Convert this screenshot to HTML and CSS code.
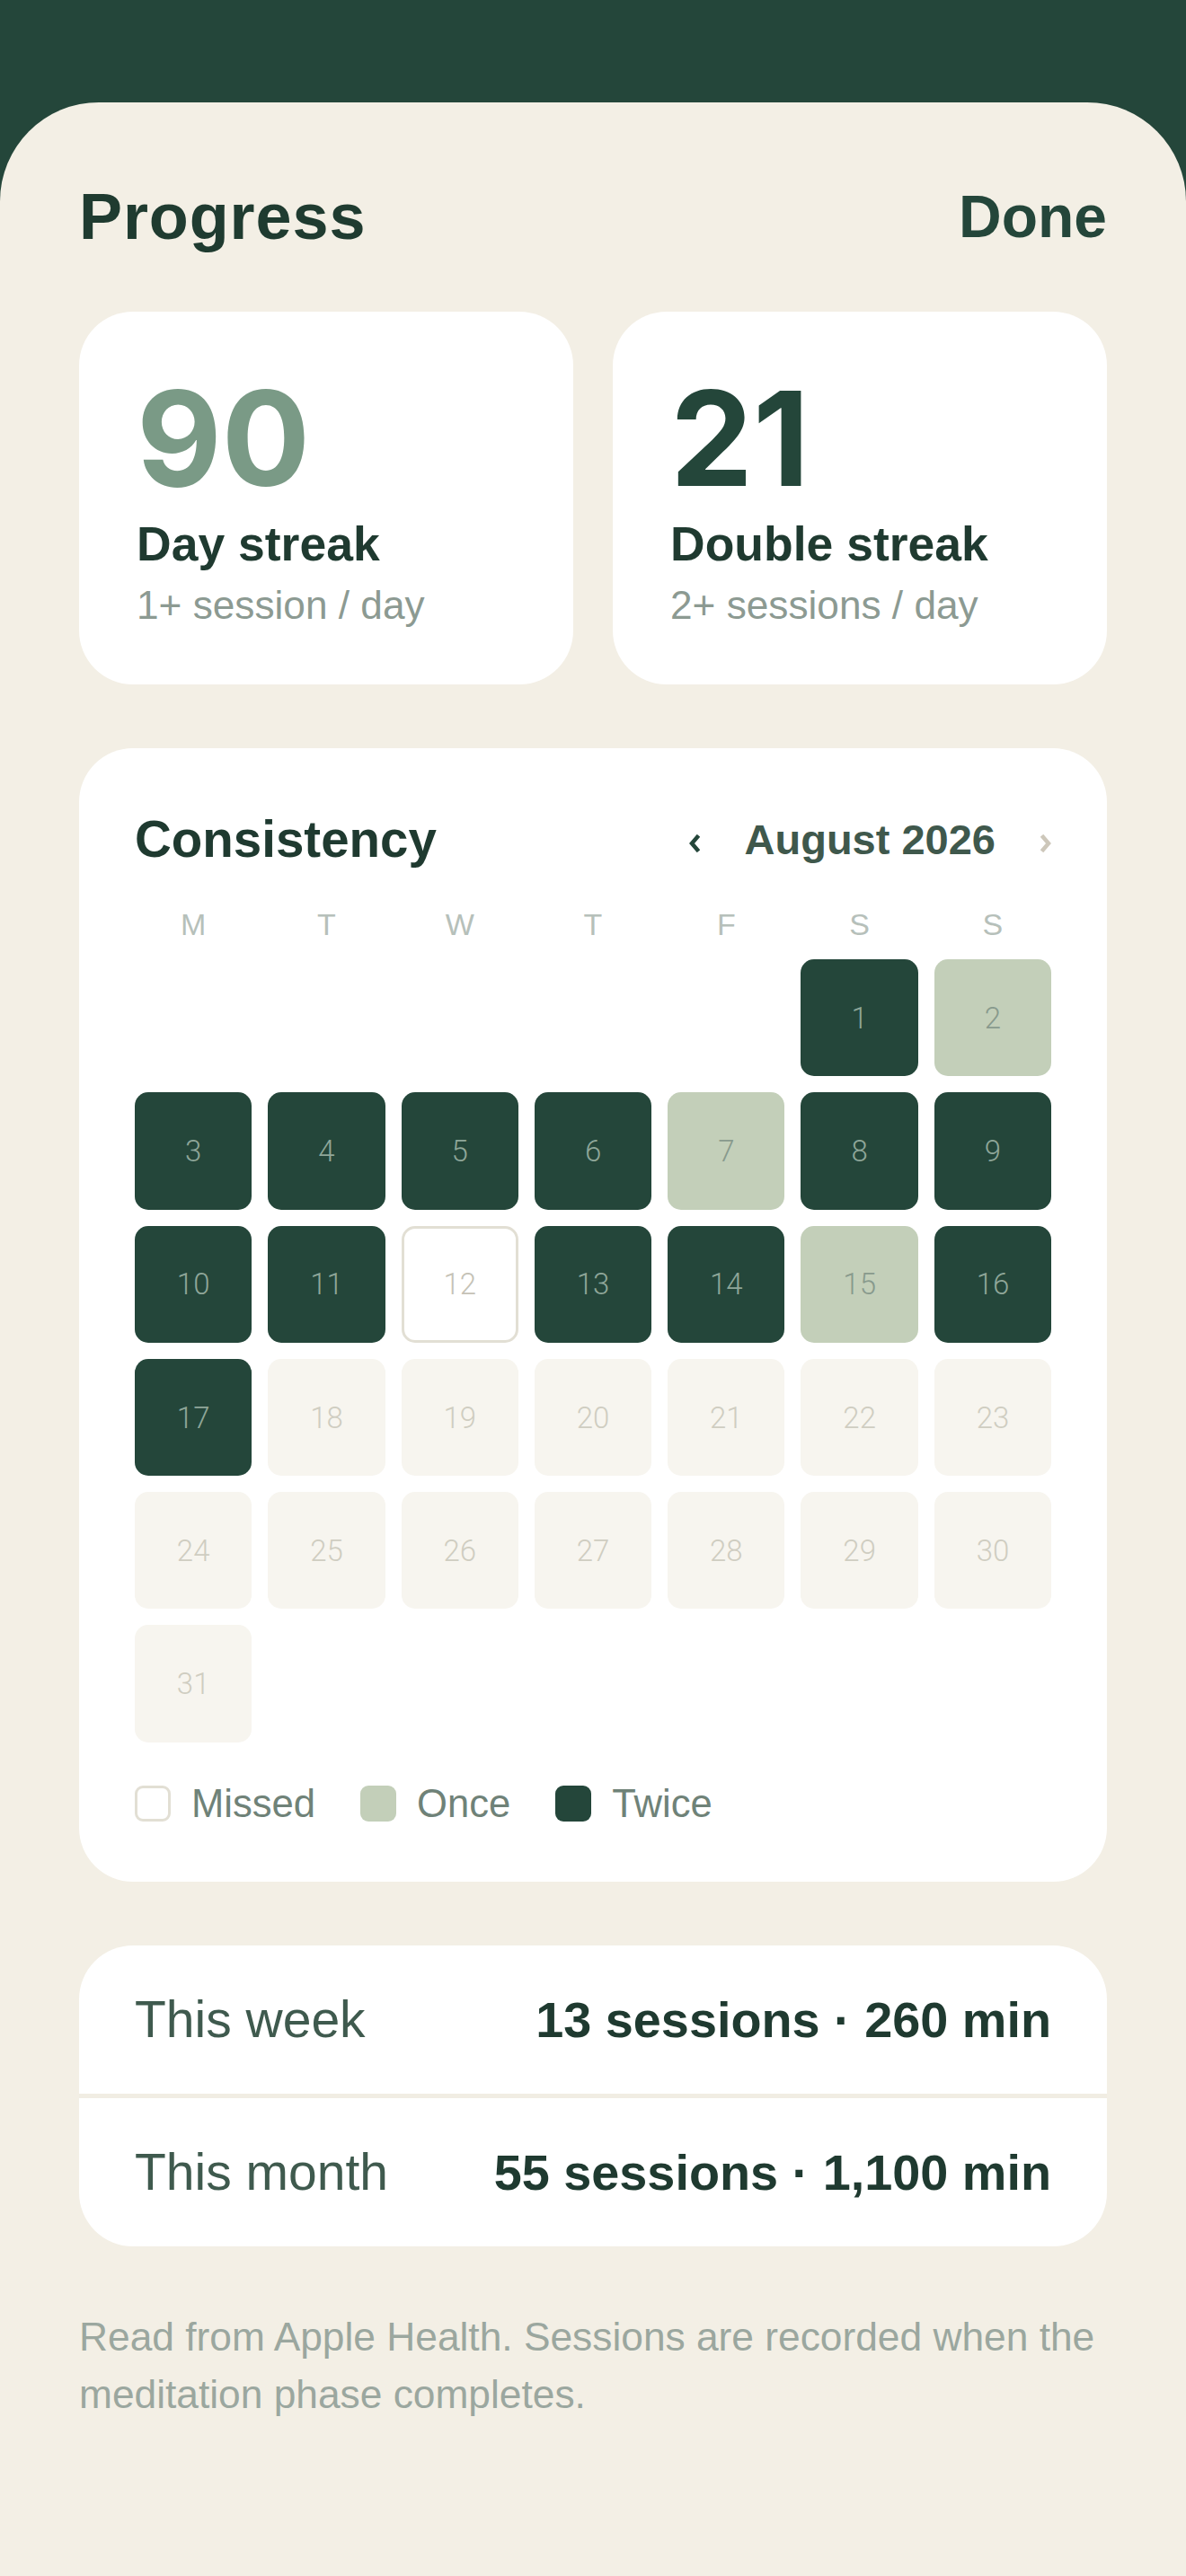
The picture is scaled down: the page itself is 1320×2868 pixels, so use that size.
FILE: index.html
```html
<!DOCTYPE html>
<html lang="en">
<head>
<meta charset="utf-8">
<title>Progress</title>
<link rel="stylesheet" href="styles.css">
</head>
<body>
<main class="sheet">
  <header class="top">
    <h1 class="title">Progress</h1>
    <span class="done">Done</span>
  </header>

  <section class="streaks">
    <div class="card streak">
      <div class="num num-light">90</div>
      <div class="label">Day streak</div>
      <div class="sub">1+ session / day</div>
    </div>
    <div class="card streak">
      <div class="num num-dark">21</div>
      <div class="label">Double streak</div>
      <div class="sub">2+ sessions / day</div>
    </div>
  </section>

  <section class="card cal">
    <div class="cal-head">
      <h2 class="cal-title">Consistency</h2>
      <div class="month-nav">
        <svg class="chev chev-prev" viewBox="0 0 12 20" width="12" height="20"><polyline points="9,3 3,10 9,17"/></svg>
        <span class="month">August 2026</span>
        <svg class="chev chev-next" viewBox="0 0 12 20" width="12" height="20"><polyline points="3,3 9,10 3,17"/></svg>
      </div>
    </div>
    <div class="weekdays">
      <span>M</span><span>T</span><span>W</span><span>T</span><span>F</span><span>S</span><span>S</span>
    </div>
    <div class="days">
      <span class="day blank"></span><span class="day blank"></span><span class="day blank"></span><span class="day blank"></span><span class="day blank"></span>
      <span class="day twice">1</span><span class="day once">2</span>
      <span class="day twice">3</span><span class="day twice">4</span><span class="day twice">5</span><span class="day twice">6</span><span class="day once">7</span><span class="day twice">8</span><span class="day twice">9</span>
      <span class="day twice">10</span><span class="day twice">11</span><span class="day missed">12</span><span class="day twice">13</span><span class="day twice">14</span><span class="day once">15</span><span class="day twice">16</span>
      <span class="day twice">17</span><span class="day future">18</span><span class="day future">19</span><span class="day future">20</span><span class="day future">21</span><span class="day future">22</span><span class="day future">23</span>
      <span class="day future">24</span><span class="day future">25</span><span class="day future">26</span><span class="day future">27</span><span class="day future">28</span><span class="day future">29</span><span class="day future">30</span>
      <span class="day future">31</span>
    </div>
    <div class="legend">
      <div class="legend-item"><span class="swatch sw-missed"></span>Missed</div>
      <div class="legend-item"><span class="swatch sw-once"></span>Once</div>
      <div class="legend-item"><span class="swatch sw-twice"></span>Twice</div>
    </div>
  </section>

  <section class="card totals">
    <div class="row">
      <span class="row-label">This week</span>
      <span class="row-value">13 sessions · 260 min</span>
    </div>
    <div class="divider"></div>
    <div class="row">
      <span class="row-label">This month</span>
      <span class="row-value">55 sessions · 1,100 min</span>
    </div>
  </section>

  <p class="note">Read from Apple Health. Sessions are recorded when the meditation phase completes.</p>
</main>
</body>
</html>
```

FILE: styles.css
```css
* { box-sizing: border-box; }

html, body {
  margin: 0;
  padding: 0;
}

body {
  background: #24463a;
  font-family: "Liberation Sans", Arial, sans-serif;
  color: #1f3a30;
}

.sheet {
  margin-top: 114px;
  min-height: 2754px;
  background: #f3efe5;
  border-radius: 110px 110px 0 0;
  padding: 87px 88px 80px;
}

.top {
  display: flex;
  justify-content: space-between;
  align-items: center;
  height: 80px;
}

.title {
  margin: 0;
  font-size: 72px;
  line-height: 80px;
  font-weight: 700;
  color: #1f3b30;
  letter-spacing: 0.9px;
}

.done {
  font-size: 66px;
  line-height: 80px;
  font-weight: 700;
  color: #24463a;
}

.card {
  background: #ffffff;
  border-radius: 60px;
}

.streaks {
  margin-top: 66px;
  display: grid;
  grid-template-columns: 1fr 1fr;
  gap: 44px;
}

.streak {
  padding: 68px 64px 62px;
}

.num {
  font-family: Inter, "Liberation Sans", sans-serif;
  font-weight: 700;
  font-size: 146px;
  line-height: 146px;
  letter-spacing: 0;
}

.num-light { color: #7a9a86; }
.num-dark { color: #24463a; }

.label {
  margin-top: 15px;
  font-size: 53.5px;
  line-height: 60px;
  font-weight: 700;
  color: #1f3a30;
}

.sub {
  margin-top: 12px;
  font-size: 44.2px;
  line-height: 52px;
  color: #8c9a92;
}

.cal {
  margin-top: 71px;
  padding: 70px 62px 62px;
}

.cal-head {
  display: flex;
  justify-content: space-between;
  align-items: center;
  height: 64px;
}

.cal-title {
  margin: 0;
  font-size: 56.5px;
  line-height: 64px;
  font-weight: 700;
  color: #1f3a30;
}

.month-nav {
  display: flex;
  align-items: center;
  gap: 50px;
}

.month {
  font-size: 47px;
  line-height: 64px;
  font-weight: 700;
  color: #3f584c;
}

.chev {
  display: block;
  fill: none;
  stroke-width: 4.5;
  stroke-linecap: square;
  stroke-linejoin: miter;
  margin-top: 8px;
}

.chev-prev { stroke: #24463a; }
.chev-next { stroke: #cdc7ba; }

.weekdays {
  margin-top: 42px;
  display: grid;
  grid-template-columns: repeat(7, 1fr);
  column-gap: 18px;
  height: 40px;
}

.weekdays span {
  text-align: center;
  font-size: 34px;
  line-height: 40px;
  color: #b6c0ba;
}

.days {
  margin-top: 19px;
  display: grid;
  grid-template-columns: repeat(7, 1fr);
  gap: 18px;
}

.day {
  aspect-ratio: 1 / 1;
  border-radius: 15px;
  display: flex;
  align-items: center;
  justify-content: center;
  font-family: Roboto, "Liberation Sans", sans-serif;
  font-weight: 300;
  font-size: 33px;
}

.day.blank { background: transparent; }
.day.twice { background: #24463a; color: #8fa699; }
.day.once { background: #c3cfb9; color: #889a8d; }
.day.missed { background: #ffffff; border: 3px solid #e2dfd4; color: #c5c2b6; }
.day.future { background: #f7f5ef; color: #cfcdc1; }

.legend {
  margin-top: 43px;
  display: flex;
  align-items: center;
  gap: 50px;
  height: 50px;
}

.legend-item {
  display: flex;
  align-items: center;
  gap: 23px;
  font-size: 43.6px;
  line-height: 50px;
  color: #6f8278;
}

.swatch {
  width: 40px;
  height: 40px;
  border-radius: 9px;
}

.sw-missed { background: #ffffff; border: 3px solid #e2dfd4; }
.sw-once { background: #c3cfb9; }
.sw-twice { background: #24463a; }

.totals {
  margin-top: 71px;
  overflow: hidden;
}

.row {
  height: 165px;
  padding: 0 62px;
  display: flex;
  justify-content: space-between;
  align-items: center;
}

.divider {
  height: 5px;
  background: #f1ede3;
}

.row-label {
  font-size: 57px;
  color: #3f5a4e;
}

.row-value {
  font-size: 55.8px;
  font-weight: 700;
  color: #1f3a30;
}

.note {
  margin: 69px 0 0;
  font-size: 44.3px;
  line-height: 64px;
  color: #9ba79f;
}
```
